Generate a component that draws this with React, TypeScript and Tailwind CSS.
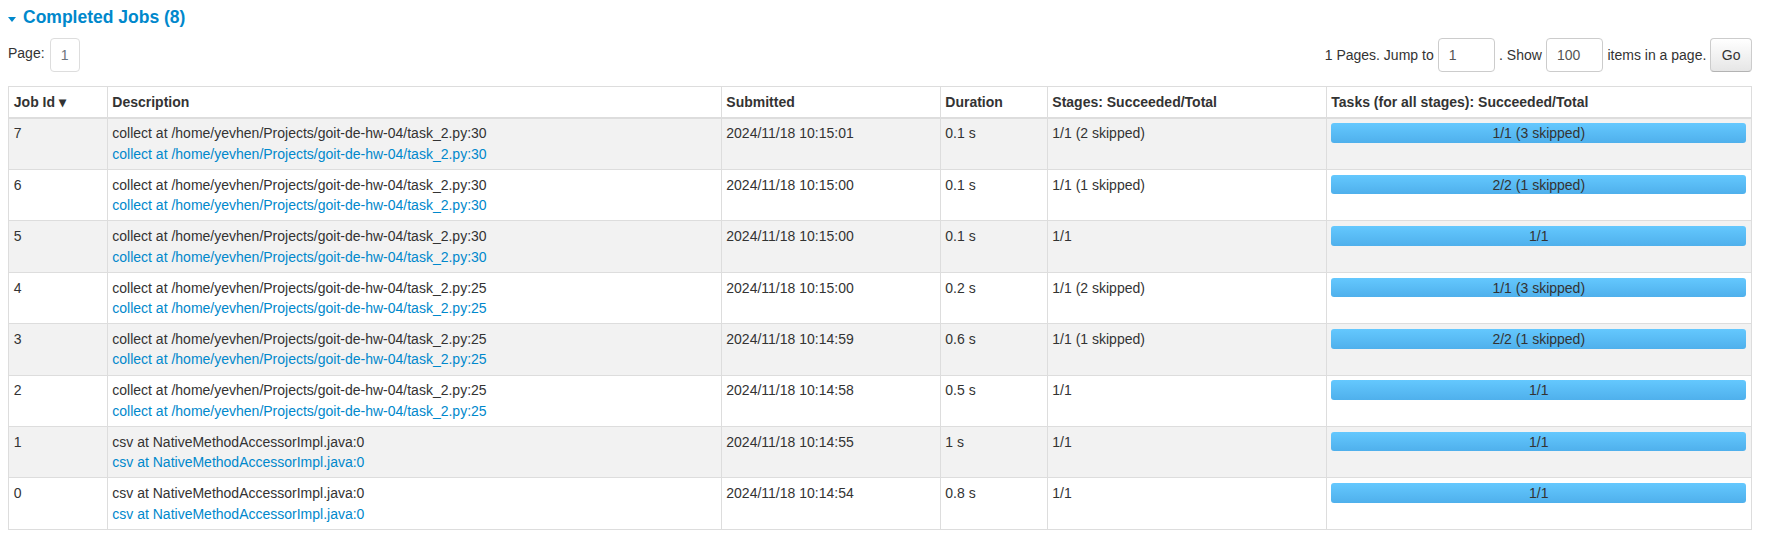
import React from "react";

type Job = {
    id: number;
    desc: string;
    submitted: string;
    duration: string;
    stages: string;
    tasks: string;
};

const py30 = "collect at /home/yevhen/Projects/goit-de-hw-04/task_2.py:30";
const py25 = "collect at /home/yevhen/Projects/goit-de-hw-04/task_2.py:25";
const csv = "csv at NativeMethodAccessorImpl.java:0";

const jobs: Job[] = [
    { id: 7, desc: py30, submitted: "2024/11/18 10:15:01", duration: "0.1 s", stages: "1/1 (2 skipped)", tasks: "1/1 (3 skipped)" },
    { id: 6, desc: py30, submitted: "2024/11/18 10:15:00", duration: "0.1 s", stages: "1/1 (1 skipped)", tasks: "2/2 (1 skipped)" },
    { id: 5, desc: py30, submitted: "2024/11/18 10:15:00", duration: "0.1 s", stages: "1/1", tasks: "1/1" },
    { id: 4, desc: py25, submitted: "2024/11/18 10:15:00", duration: "0.2 s", stages: "1/1 (2 skipped)", tasks: "1/1 (3 skipped)" },
    { id: 3, desc: py25, submitted: "2024/11/18 10:14:59", duration: "0.6 s", stages: "1/1 (1 skipped)", tasks: "2/2 (1 skipped)" },
    { id: 2, desc: py25, submitted: "2024/11/18 10:14:58", duration: "0.5 s", stages: "1/1", tasks: "1/1" },
    { id: 1, desc: csv, submitted: "2024/11/18 10:14:55", duration: "1 s", stages: "1/1", tasks: "1/1" },
    { id: 0, desc: csv, submitted: "2024/11/18 10:14:54", duration: "0.8 s", stages: "1/1", tasks: "1/1" },
];

const th = "border border-[#dddddd] border-b-2 px-[4.8px] py-[4.7px] text-left font-bold align-top";
const td = "border border-[#dddddd] px-[4.8px] py-[4.8px] leading-[20.4px] align-top";

function ProgressBar({ label }: { label: string }) {
    return (
        <div className="h-[19.5px] w-full rounded-[3px] bg-gradient-to-b from-[#64c8fe] to-[#4fb0ec] text-center leading-[21px] text-[#333]">
            {label}
        </div>
    );
}

export default function App() {
    return (
        <div className="min-h-screen bg-white pl-2 pr-[14px] font-['Liberation_Sans',Arial,sans-serif] text-[14px] leading-[20px] text-[#333]">
            {/* section header */}
            <div className="mt-[6.6px] flex h-[20px] items-start">
                <span className="mt-[10.5px] h-0 w-0 border-x-4 border-t-[5px] border-x-transparent border-t-[#0088cc]" />
                <a href="#" className="ml-[7px] text-[17.5px] font-bold leading-[20px] text-[#0088cc]">
                    Completed Jobs (8)
                </a>
            </div>

            {/* pagination */}
            <div className="mt-[11.7px] flex h-[33.4px] items-start justify-between">
                <div className="flex items-start">
                    <span className="mt-[5px]">Page:</span>
                    <span className="ml-[5px] flex h-[33.4px] w-[30px] items-center justify-center rounded-[4px] border border-[#dddddd] text-[#6c757d]">
                        1
                    </span>
                </div>
                <div className="flex h-[33.4px] items-center">
                    <span>1 Pages. Jump to</span>
                    <div className="mx-[4px] flex h-[33.4px] w-[57.4px] items-center rounded-[4px] border border-[#cccccc] pl-[10px] text-[#555]">
                        1
                    </div>
                    <span>. Show</span>
                    <div className="mx-[4px] flex h-[33.4px] w-[57.6px] items-center rounded-[4px] border border-[#cccccc] pl-[10px] text-[#555]">
                        100
                    </div>
                    <span>items in a page.</span>
                    <button className="ml-[4px] flex h-[33.4px] w-[41.7px] items-center justify-center rounded-[4px] border border-[#cccccc] border-b-[#b3b3b3] bg-gradient-to-b from-white to-[#e6e6e6] text-[#333]">
                        Go
                    </button>
                </div>
            </div>

            {/* jobs table */}
            <table className="mt-[14.6px] w-full table-fixed border-collapse">
                <colgroup>
                    <col className="w-[98.5px]" />
                    <col className="w-[614px]" />
                    <col className="w-[219px]" />
                    <col className="w-[107px]" />
                    <col className="w-[279px]" />
                    <col />
                </colgroup>
                <thead>
                    <tr>
                        <th className={th}>Job Id ▾</th>
                        <th className={th}>Description</th>
                        <th className={th}>Submitted</th>
                        <th className={th}>Duration</th>
                        <th className={th}>Stages: Succeeded/Total</th>
                        <th className={th}>Tasks (for all stages): Succeeded/Total</th>
                    </tr>
                </thead>
                <tbody>
                    {jobs.map((job, i) => (
                        <tr key={job.id} className={i % 2 === 0 ? "bg-[#f2f2f2]" : "bg-white"}>
                            <td className={td}>{job.id}</td>
                            <td className={td}>
                                <div>{job.desc}</div>
                                <a href="#" className="block text-[#0088cc]">
                                    {job.desc}
                                </a>
                            </td>
                            <td className={td}>{job.submitted}</td>
                            <td className={td}>{job.duration}</td>
                            <td className={td}>{job.stages}</td>
                            <td className={td}>
                                <ProgressBar label={job.tasks} />
                            </td>
                        </tr>
                    ))}
                </tbody>
            </table>
        </div>
    );
}
